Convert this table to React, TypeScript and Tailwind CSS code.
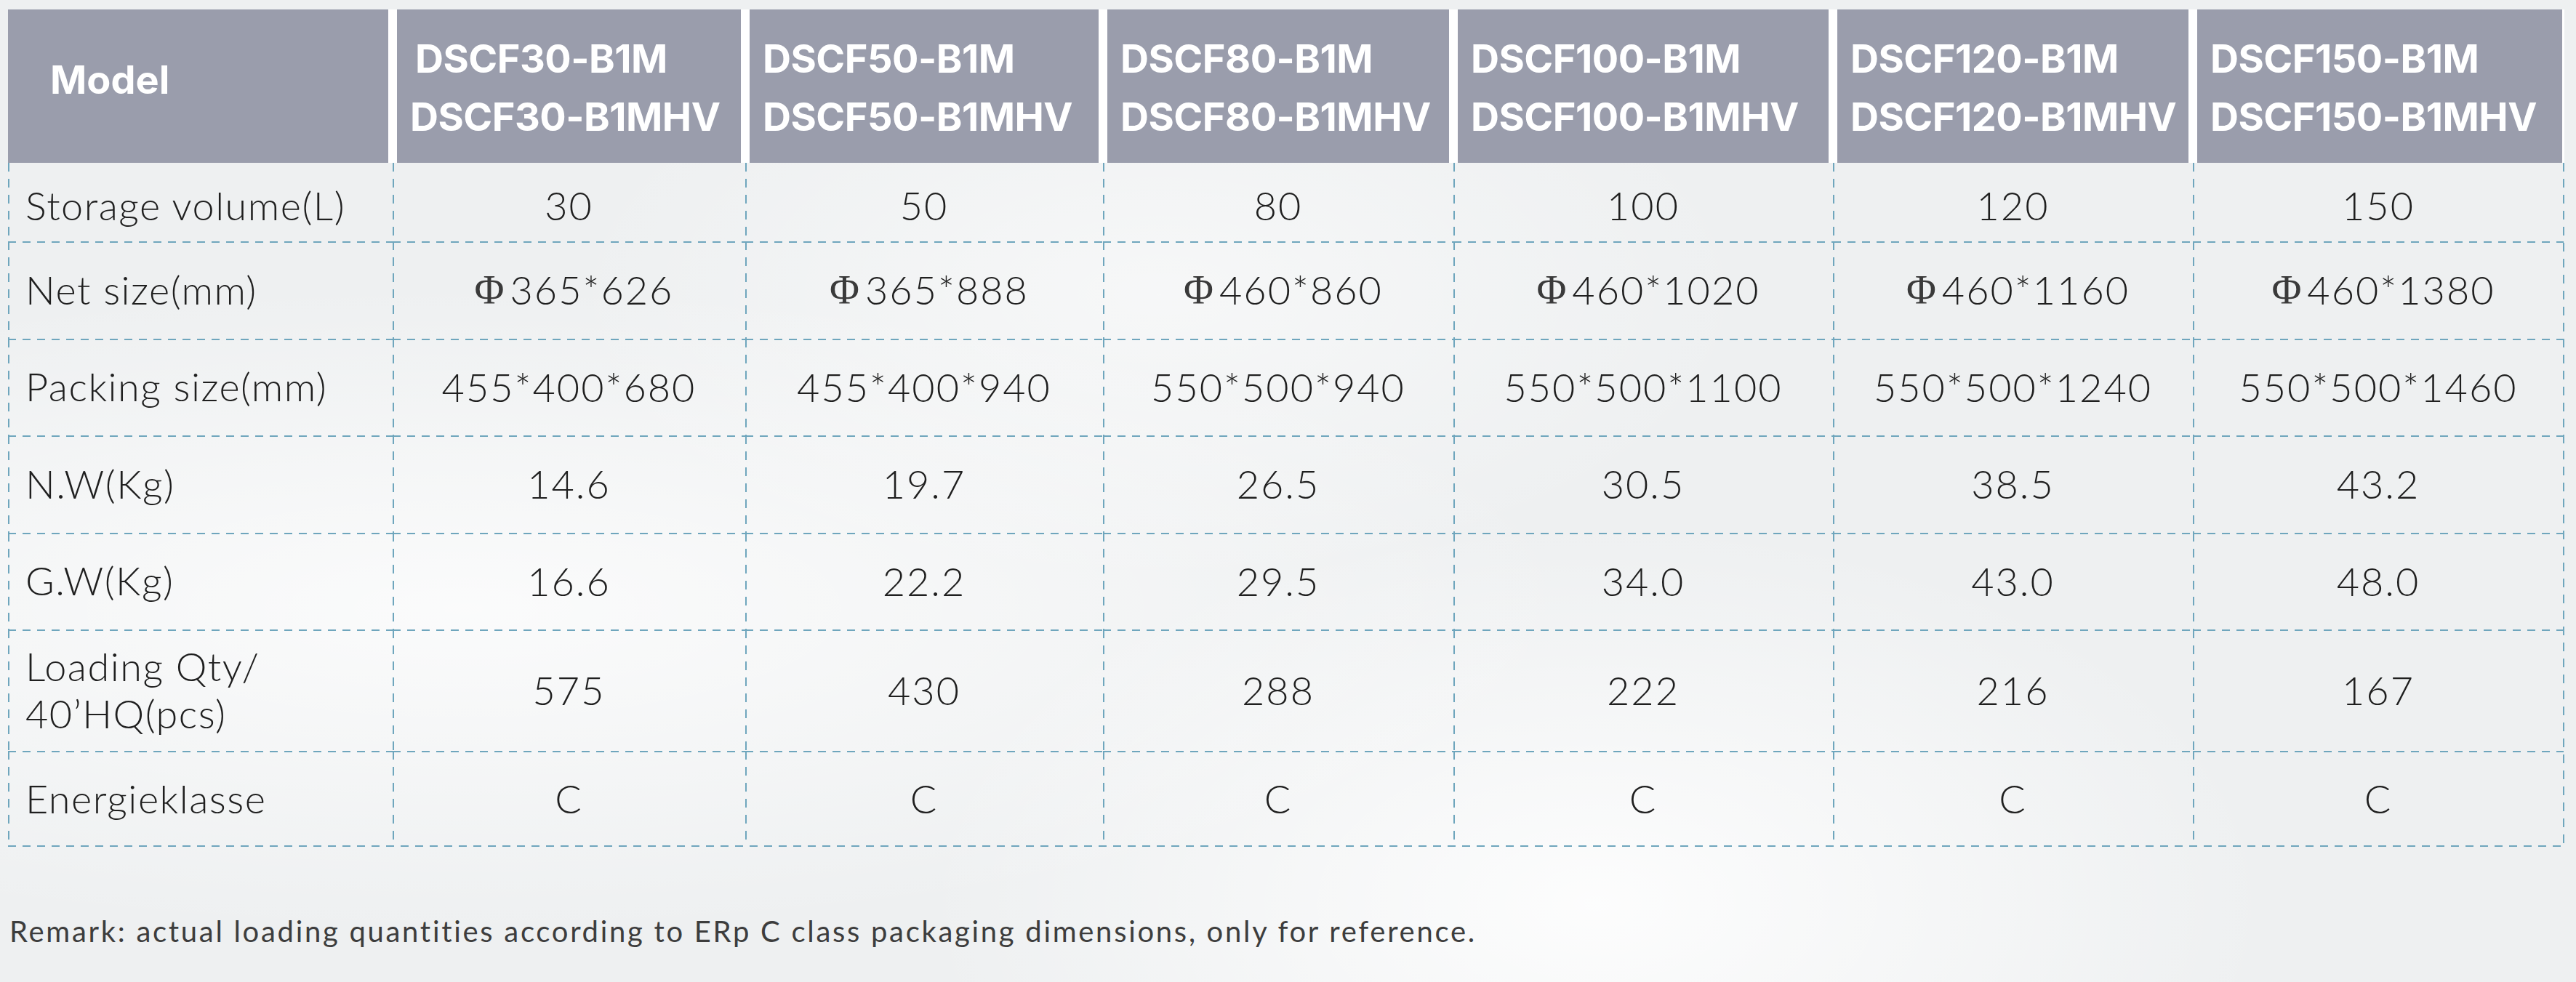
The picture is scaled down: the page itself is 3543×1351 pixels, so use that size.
const cols = 'grid grid-cols-[529px_485px_492px_482px_522px_495px_510px]';

const models = [
  ['DSCF30-B1M', 'DSCF30-B1MHV'],
  ['DSCF50-B1M', 'DSCF50-B1MHV'],
  ['DSCF80-B1M', 'DSCF80-B1MHV'],
  ['DSCF100-B1M', 'DSCF100-B1MHV'],
  ['DSCF120-B1M', 'DSCF120-B1MHV'],
  ['DSCF150-B1M', 'DSCF150-B1MHV'],
];

const rows: { label: string[]; values: string[]; h: string; phi?: boolean }[] = [
  { label: ['Storage volume(L)'], values: ['30', '50', '80', '100', '120', '150'], h: 'h-[108px]' },
  { label: ['Net size(mm)'], values: ['365*626', '365*888', '460*860', '460*1020', '460*1160', '460*1380'], h: 'h-[134px]', phi: true },
  { label: ['Packing size(mm)'], values: ['455*400*680', '455*400*940', '550*500*940', '550*500*1100', '550*500*1240', '550*500*1460'], h: 'h-[133px]' },
  { label: ['N.W(Kg)'], values: ['14.6', '19.7', '26.5', '30.5', '38.5', '43.2'], h: 'h-[134px]' },
  { label: ['G.W(Kg)'], values: ['16.6', '22.2', '29.5', '34.0', '43.0', '48.0'], h: 'h-[133px]' },
  { label: ['Loading Qty/', '40’HQ(pcs)'], values: ['575', '430', '288', '222', '216', '167'], h: 'h-[167px]' },
  { label: ['Energieklasse'], values: ['C', 'C', 'C', 'C', 'C', 'C'], h: 'h-[132px]' },
];

// dashed top + left edges of a cell
const edgeTopLeft =
  'bg-[repeating-linear-gradient(90deg,#6fa6bd_0_11px,transparent_11px_20px),repeating-linear-gradient(180deg,#6fa6bd_0_12px,transparent_12px_22px)] bg-[length:100%_2px,2px_100%] bg-no-repeat';
const edgeLeft =
  'bg-[repeating-linear-gradient(180deg,#6fa6bd_0_12px,transparent_12px_22px)] bg-[length:2px_100%] bg-no-repeat';

function HeaderCell({ i, children }: { i: number; children: React.ReactNode }) {
  const pad = i === 0 ? 'pr-[6px]' : i === 6 ? 'pl-[6px] pr-[2px]' : 'px-[6px]';
  return (
    <div className={`h-full ${pad}`}>
      <div className="h-full bg-[#9a9dac] flex flex-col justify-center">{children}</div>
    </div>
  );
}

export default function App() {
  return (
    <div className="w-[3543px] h-[1351px] overflow-hidden bg-[#eef0f1] bg-[radial-gradient(ellipse_at_18%_62%,rgba(255,255,255,0.75),transparent_38%),radial-gradient(ellipse_at_62%_92%,rgba(255,255,255,0.85),transparent_30%),radial-gradient(ellipse_at_45%_30%,rgba(255,255,255,0.5),transparent_30%)] font-['Lato','Liberation_Sans',sans-serif] text-[#1f1f1f]">
      <div className="pt-[13px] pl-[11px]">
        <div className="w-[3516px]">
          {/* header */}
          <div className={`${cols} h-[211px] bg-white font-['Inter','Liberation_Sans',sans-serif]`}>
            <HeaderCell i={0}>
              <span className="pl-[58px] pb-[18px] text-white font-bold text-[54px] leading-none">Model</span>
            </HeaderCell>
            {models.map((m, i) => (
              <HeaderCell key={m[0]} i={i + 1}>
                <div className="pl-[18px] pt-[4px] text-white font-bold text-[54px] leading-[80px] tracking-[-0.5px]">
                  <div className={i === 0 ? 'pl-[7px]' : ''}>{m[0]}</div>
                  <div>{m[1]}</div>
                </div>
              </HeaderCell>
            ))}
          </div>

          {/* body */}
          <div className="bg-[repeating-linear-gradient(90deg,#6fa6bd_0_11px,transparent_11px_20px),repeating-linear-gradient(180deg,#6fa6bd_0_12px,transparent_12px_22px)] bg-[length:100%_2px,2px_100%] bg-[position:0_100%,100%_0] bg-no-repeat">
            {rows.map((r, ri) => (
              <div key={r.label[0]} className={`${cols} ${r.h}`}>
                <div className={`${ri === 0 ? edgeLeft : edgeTopLeft} flex flex-col justify-center pl-[24px] text-[54px] font-light tracking-[1.5px] leading-[1.2] ${ri === 0 ? 'pt-[10px]' : ''}`}>
                  {r.label.map((l) => (
                    <div key={l}>{l}</div>
                  ))}
                </div>
                {r.values.map((v, vi) => (
                  <div
                    key={vi}
                    className={`${ri === 0 ? edgeLeft : edgeTopLeft} flex items-center justify-center text-[54px] font-light tracking-[2px] leading-none ${ri === 0 ? 'pt-[10px]' : ''} ${r.phi ? 'pl-[14px]' : ''}`}
                  >
                    {r.phi && (
                      <span className="font-['Liberation_Serif','DejaVu_Serif',serif] font-normal text-[56px] text-[#3a3a3a] mr-[8px] tracking-normal">Φ</span>
                    )}
                    {v}
                  </div>
                ))}
              </div>
            ))}
          </div>
        </div>

        <p className="mt-[96px] pl-[2px] text-[40px] tracking-[2.7px] text-[#3d3d3d] leading-none">
          Remark: actual loading quantities according to ERp C class packaging dimensions, only for reference.
        </p>
      </div>
    </div>
  );
}
